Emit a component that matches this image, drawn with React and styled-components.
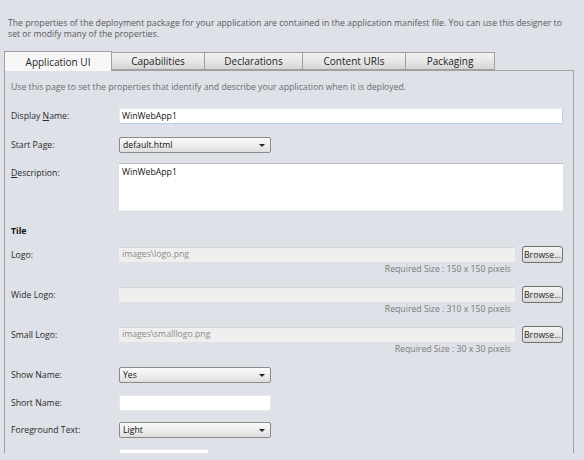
import React from 'react';
import styled, { createGlobalStyle } from 'styled-components';

const GlobalStyle = createGlobalStyle`
	html, body {
		margin: 0;
		padding: 0;
		background: #dee1e8;
	}
	body {
		font-family: 'Open Sans', 'DejaVu Sans', sans-serif;
		font-size: 8.7px;
		color: #1e1e1e;
	}
`;

const tabs = ['Application UI', 'Capabilities', 'Declarations', 'Content URIs', 'Packaging'];

const logos = [
	{ label: 'Logo:', value: 'images\\logo.png', size: '150 x 150' },
	{ label: 'Wide Logo:', value: '', size: '310 x 150' },
	{ label: 'Small Logo:', value: 'images\\smalllogo.png', size: '30 x 30' }
];

const Select = ({ value }) => (
	<DropDown>
		<span>{value}</span>
		<Arrow />
	</DropDown>
);

const App = () => {
	return (
		<Page>
			<GlobalStyle />
			<Intro>
				The properties of the deployment package for your application are contained in the
				application manifest file. You can use this designer to set or modify many of the
				properties.
			</Intro>
			<TabStrip>
				{tabs.map((tab, index) => (
					<Tab key={tab} active={index === 0} width={[108, 93, 98, 103, 89][index]}>
						{tab}
					</Tab>
				))}
			</TabStrip>
			<Panel>
				<Hint>Use this page to set the properties that identify and describe your application when it is deployed.</Hint>
				<Row top={15}>
					<Label>
						Display <u>N</u>ame:
					</Label>
					<TextBox focused>WinWebApp1</TextBox>
				</Row>
				<Row top={13}>
					<Label>Start Page:</Label>
					<Select value="default.html" />
				</Row>
				<Row top={10} align="flex-start">
					<Label pad>
						<u>D</u>escription:
					</Label>
					<TextArea>WinWebApp1</TextArea>
				</Row>
				<Section>Tile</Section>
				{logos.map((logo, index) => (
					<LogoGroup key={logo.label} top={index === 0 ? 9 : 11}>
						<Row top={0}>
							<Label>{logo.label}</Label>
							<DisabledBox>{logo.value}</DisabledBox>
							<Button>Browse...</Button>
						</Row>
						<SizeNote>Required Size : {logo.size} pixels</SizeNote>
					</LogoGroup>
				))}
				<Row top={12}>
					<Label>Show Name:</Label>
					<Select value="Yes" />
				</Row>
				<Row top={12}>
					<Label>Short Name:</Label>
					<TextBox small />
				</Row>
				<Row top={11}>
					<Label>Foreground Text:</Label>
					<Select value="Light" />
				</Row>
				<Row top={11}>
					<Label>Background Color:</Label>
					<TextBox tiny>#000000</TextBox>
				</Row>
			</Panel>
		</Page>
	);
};

const Page = styled.div`
	width: 584px;
	height: 460px;
	overflow: hidden;
	box-sizing: border-box;
	padding: 18px 0 0 4px;
`;

const Intro = styled.div`
	padding: 0 8px 0 4px;
	line-height: 11px;
	color: #5a5a5a;
	height: 33px;
`;

const TabStrip = styled.div`
	display: flex;
	align-items: flex-end;
	height: 19px;
`;

const Tab = styled.div`
	box-sizing: border-box;
	width: ${props => props.width}px;
	height: ${props => (props.active ? 20 : 18)}px;
	margin-bottom: ${props => (props.active ? -1 : 0)}px;
	display: flex;
	align-items: center;
	justify-content: center;
	font-size: 10px;
	color: #1e1e1e;
	border: 1px solid #a0a0a0;
	border-bottom: ${props => (props.active ? 'none' : '1px solid #a0a0a0')};
	border-left: ${props => (props.active ? '1px solid #a0a0a0' : 'none')};
	background: ${props =>
		props.active ? '#f7f7f8' : 'linear-gradient(#f3f3f3, #e6e6e6 55%, #d6d6d6)'};
	position: relative;
	z-index: ${props => (props.active ? 1 : 0)};
`;

const Panel = styled.div`
	box-sizing: border-box;
	width: 570px;
	height: 383px;
	overflow: hidden;
	border: 1px solid #a0a0a0;
	border-bottom: none;
	padding: 0 9px 0 6px;
`;

const Hint = styled.div`
	margin-top: 11px;
	line-height: 11px;
	color: #6d6d6d;
`;

const Row = styled.div`
	display: flex;
	align-items: ${props => props.align || 'center'};
	margin-top: ${props => props.top}px;
`;

const Label = styled.div`
	width: 108px;
	flex-shrink: 0;
	color: #2a2a2a;
	padding-top: ${props => (props.pad ? 4 : 0)}px;
	u {
		text-decoration: underline;
		text-underline-offset: 1px;
	}
`;

const TextBox = styled.div`
	box-sizing: border-box;
	width: ${props => (props.tiny ? 90 : props.small ? 152 : 444)}px;
	height: 16px;
	line-height: 14px;
	padding: 0 2px;
	background: #ffffff;
	border: 1px solid ${props => (props.focused ? '#b6d1e6' : '#e6e8ec')};
	border-left-color: ${props => (props.focused ? '#e2ecf4' : '#e6e8ec')};
	border-top-color: ${props => (props.focused ? '#e2ecf4' : '#e6e8ec')};
	color: #111;
`;

const TextArea = styled.div`
	box-sizing: border-box;
	width: 444px;
	height: 48px;
	padding: 2px 3px;
	line-height: 12px;
	background: #ffffff;
	border-top: 1px solid #bcbcbc;
	border-bottom: 1px solid #eef0f3;
	color: #111;
`;

const DropDown = styled.div`
	box-sizing: border-box;
	width: 152px;
	height: 16px;
	display: flex;
	align-items: center;
	justify-content: space-between;
	padding: 0 5px 0 3px;
	border: 1px solid #8a8a8a;
	border-radius: 2px;
	background: linear-gradient(#fafafa, #eeeeee 50%, #dedede);
	color: #111;
`;

const Arrow = styled.span`
	width: 0;
	height: 0;
	border-left: 3px solid transparent;
	border-right: 3px solid transparent;
	border-top: 3px solid #222;
`;

const Section = styled.div`
	margin-top: 15px;
	font-weight: bold;
	color: #111;
	line-height: 11px;
`;

const LogoGroup = styled.div`
	margin-top: ${props => props.top}px;
`;

const DisabledBox = styled.div`
	box-sizing: border-box;
	width: 396px;
	height: 15px;
	line-height: 13px;
	padding: 0 3px;
	background: #efefef;
	border-top: 1px solid #d4d4d4;
	color: #8a8a8a;
`;

const Button = styled.div`
	box-sizing: border-box;
	margin-left: 7px;
	width: 41px;
	height: 17px;
	display: flex;
	align-items: center;
	justify-content: center;
	border: 1px solid #707070;
	border-radius: 3px;
	background: linear-gradient(#f4f4f4, #e8e8e8 50%, #d9d9d9);
	color: #1e1e1e;
	font-size: 8.7px;
`;

const SizeNote = styled.div`
	width: 500px;
	text-align: right;
	color: #7a7a7a;
	line-height: 11px;
	margin-top: 1px;
`;

export default App;
